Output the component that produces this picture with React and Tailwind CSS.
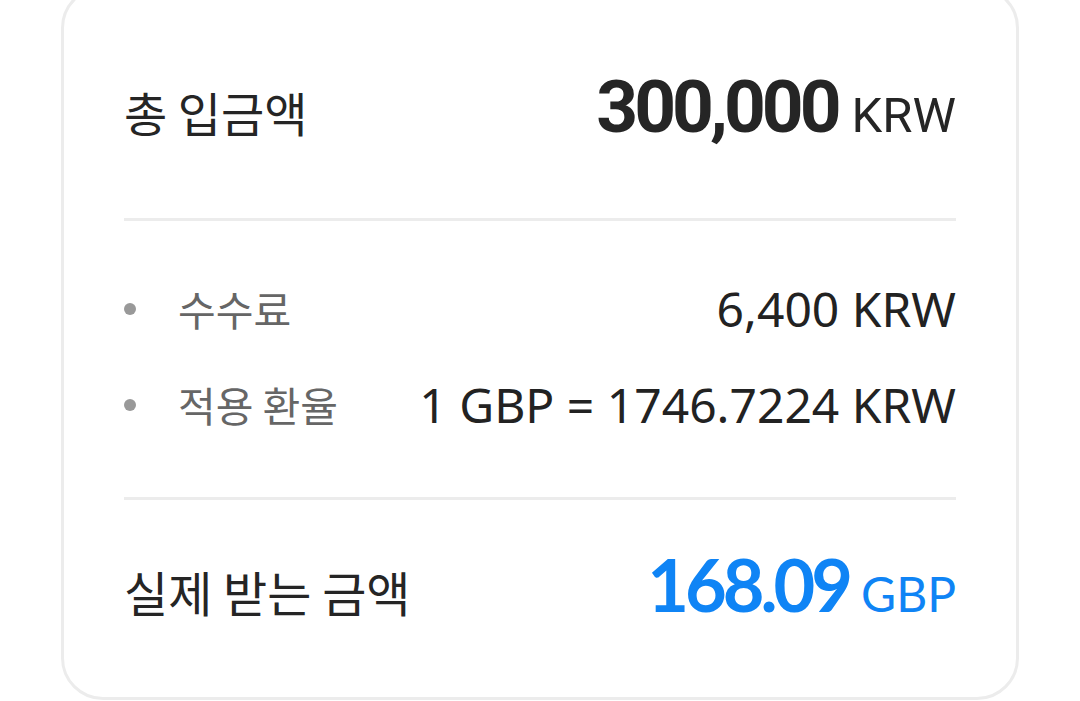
const kr = { fontFamily: '"Noto Sans CJK KR", "Noto Sans", sans-serif' };
const roboto = { fontFamily: 'Roboto, "Noto Sans", sans-serif' };
const noto = { fontFamily: '"Noto Sans", "Noto Sans CJK KR", sans-serif' };
const lato = { fontFamily: 'Lato, "Noto Sans", sans-serif' };

const details = [
  { label: '수수료', value: '6,400 KRW' },
  { label: '적용 환율', value: '1 GBP = 1746.7224 KRW' },
];

export default function App() {
  return (
    <div className="w-[1080px] h-[701px] bg-white overflow-hidden">
      <div className="ml-[61px] -mt-[14px] w-[958px] h-[714px] border-[3px] border-[#ececec] rounded-[42px] px-[60px]">
        {/* total deposit */}
        <div className="h-[229px] pt-[82px]">
          <div className="flex items-baseline justify-between h-[70px]">
            <span className="text-[47px] text-[#252525]" style={kr}>총 입금액</span>
            <div className="flex items-baseline gap-[14px] text-[#252525]" style={roboto}>
              <span className="text-[73px] font-bold tracking-[-4px] leading-none">300,000</span>
              <span className="text-[49px] leading-none">KRW</span>
            </div>
          </div>
        </div>

        <div className="h-[3px] bg-[#ececec]" />

        {/* fee + rate */}
        <div className="flex flex-col gap-[36px] pt-[58px] pb-[62px]">
          {details.map((d) => (
            <div key={d.label} className="flex items-center justify-between h-[60px]">
              <div className="flex items-center">
                <span className="w-[12px] h-[12px] rounded-full bg-[#999999] mr-[42px]" />
                <span className="text-[41px] text-[#666666]" style={kr}>{d.label}</span>
              </div>
              <span className="text-[48px] text-[#222222] leading-none" style={noto}>{d.value}</span>
            </div>
          ))}
        </div>

        <div className="h-[3px] bg-[#ececec]" />

        {/* real amount */}
        <div className="pt-[48px]">
          <div className="flex items-baseline justify-between h-[70px]">
            <span className="text-[48px] text-[#252525]" style={kr}>실제 받는 금액</span>
            <div className="flex items-baseline gap-[12px] text-[#0f84f5]" style={lato}>
              <span className="text-[72px] font-bold tracking-[-4px] leading-none">168.09</span>
              <span className="text-[48px] leading-none">GBP</span>
            </div>
          </div>
        </div>
      </div>
    </div>
  );
}
